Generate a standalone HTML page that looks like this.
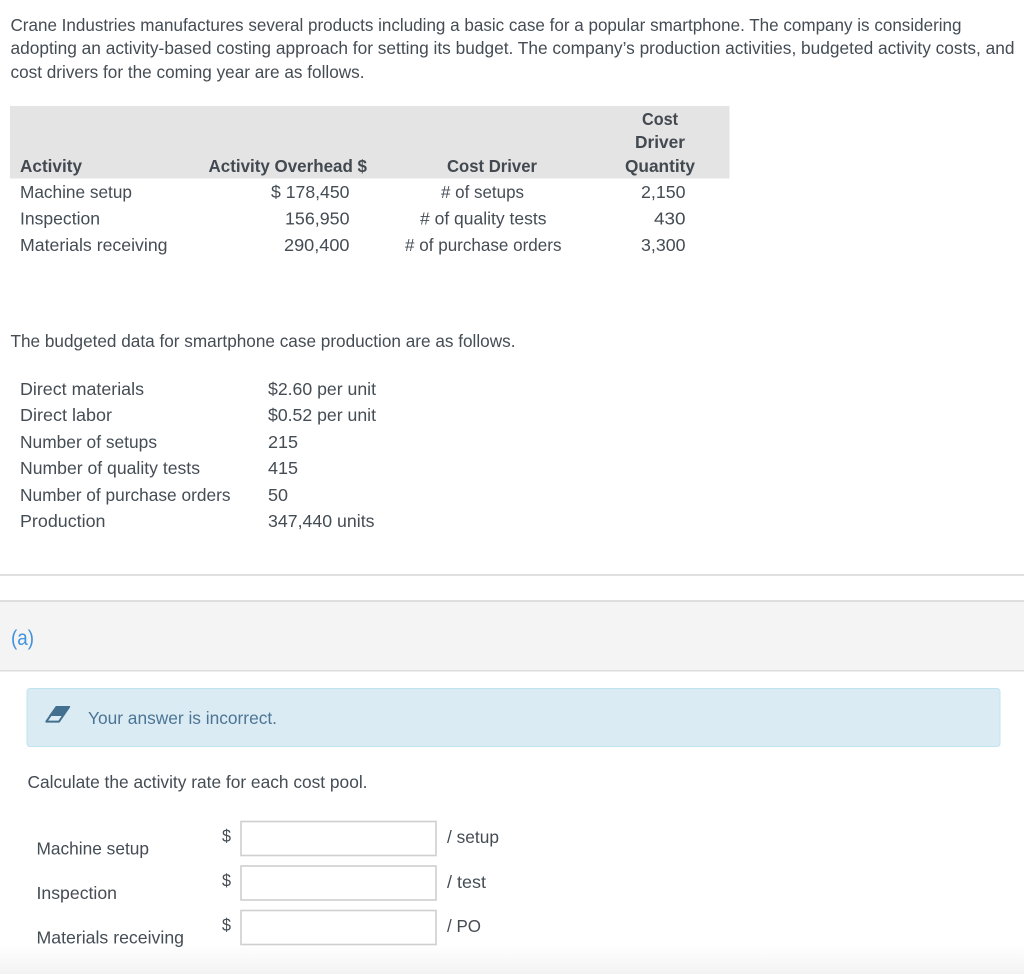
<!DOCTYPE html>
<html lang="en">
<head>
<meta charset="utf-8">
<title>Crane Industries</title>
<style>
html,body{margin:0;padding:0;background:#fff;width:1024px;height:974px;overflow:hidden}
svg{display:block}
text{font-family:"Liberation Sans",sans-serif;font-size:17.5px;fill:#444c54}
.b{font-weight:bold;fill:#424950}
</style>
</head>
<body>
<svg width="1024" height="974" viewBox="0 0 1024 974" xmlns="http://www.w3.org/2000/svg">
<defs><linearGradient id="g" x1="0" y1="0" x2="0" y2="1"><stop offset="0" stop-color="#ffffff"/><stop offset="1" stop-color="#f3f3f3"/></linearGradient></defs>
<rect x="0" y="944" width="1024" height="30" fill="url(#g)"/>

<text x="10.5" y="31" textLength="951" lengthAdjust="spacingAndGlyphs">Crane Industries manufactures several products including a basic case for a popular smartphone. The company is considering</text>
<text x="10.5" y="54" textLength="1004" lengthAdjust="spacingAndGlyphs">adopting an activity-based costing approach for setting its budget. The company’s production activities, budgeted activity costs, and</text>
<text x="10.5" y="78" textLength="354" lengthAdjust="spacingAndGlyphs">cost drivers for the coming year are as follows.</text>

<rect x="10" y="106" width="719.5" height="72.5" fill="#e4e4e4"/>
<text class="b" x="642" y="125" textLength="36" lengthAdjust="spacingAndGlyphs">Cost</text>
<text class="b" x="635" y="148" textLength="50" lengthAdjust="spacingAndGlyphs">Driver</text>
<text class="b" x="20" y="172" textLength="62" lengthAdjust="spacingAndGlyphs">Activity</text>
<text class="b" x="208.5" y="172" textLength="158.5" lengthAdjust="spacingAndGlyphs">Activity Overhead $</text>
<text class="b" x="447" y="172" textLength="90" lengthAdjust="spacingAndGlyphs">Cost Driver</text>
<text class="b" x="625" y="172" textLength="70" lengthAdjust="spacingAndGlyphs">Quantity</text>

<text x="20" y="198" textLength="112" lengthAdjust="spacingAndGlyphs">Machine setup</text>
<text x="271" y="198" textLength="78.5" lengthAdjust="spacingAndGlyphs">$ 178,450</text>
<text x="441" y="198" textLength="83" lengthAdjust="spacingAndGlyphs"># of setups</text>
<text x="641" y="198" textLength="44.5" lengthAdjust="spacingAndGlyphs">2,150</text>
<text x="20" y="224.5" textLength="80" lengthAdjust="spacingAndGlyphs">Inspection</text>
<text x="285" y="224.5" textLength="64.5" lengthAdjust="spacingAndGlyphs">156,950</text>
<text x="420" y="224.5" textLength="126.5" lengthAdjust="spacingAndGlyphs"># of quality tests</text>
<text x="654" y="224.5" textLength="31.5" lengthAdjust="spacingAndGlyphs">430</text>
<text x="20" y="251" textLength="147.5" lengthAdjust="spacingAndGlyphs">Materials receiving</text>
<text x="284" y="251" textLength="65.5" lengthAdjust="spacingAndGlyphs">290,400</text>
<text x="405" y="251" textLength="156.5" lengthAdjust="spacingAndGlyphs"># of purchase orders</text>
<text x="641" y="251" textLength="44.5" lengthAdjust="spacingAndGlyphs">3,300</text>

<text x="10.5" y="347" textLength="505" lengthAdjust="spacingAndGlyphs">The budgeted data for smartphone case production are as follows.</text>

<text x="20" y="395" textLength="124" lengthAdjust="spacingAndGlyphs">Direct materials</text>
<text x="268" y="395" textLength="108" lengthAdjust="spacingAndGlyphs">$2.60 per unit</text>
<text x="20" y="421" textLength="92" lengthAdjust="spacingAndGlyphs">Direct labor</text>
<text x="268" y="421" textLength="108" lengthAdjust="spacingAndGlyphs">$0.52 per unit</text>
<text x="20" y="448" textLength="137" lengthAdjust="spacingAndGlyphs">Number of setups</text>
<text x="268" y="448" textLength="30" lengthAdjust="spacingAndGlyphs">215</text>
<text x="20" y="474" textLength="180" lengthAdjust="spacingAndGlyphs">Number of quality tests</text>
<text x="268" y="474" textLength="30" lengthAdjust="spacingAndGlyphs">415</text>
<text x="20" y="501" textLength="210.5" lengthAdjust="spacingAndGlyphs">Number of purchase orders</text>
<text x="268" y="501" textLength="20" lengthAdjust="spacingAndGlyphs">50</text>
<text x="20" y="527" textLength="85.5" lengthAdjust="spacingAndGlyphs">Production</text>
<text x="268" y="527" textLength="106.5" lengthAdjust="spacingAndGlyphs">347,440 units</text>

<rect x="0" y="574" width="1024" height="2" fill="#e0e0e0"/>
<rect x="0" y="600" width="1024" height="71" fill="#f4f4f4"/>
<rect x="0" y="600" width="1024" height="2" fill="#dedede"/>
<rect x="0" y="670" width="1024" height="1.5" fill="#dedede"/>
<text x="11" y="645" textLength="23" lengthAdjust="spacingAndGlyphs" style="font-size:21px;fill:#4291dc">(a)</text>

<rect x="27" y="688.5" width="973" height="58" rx="3" fill="#daebf3" stroke="#bfe4ef" stroke-width="1"/>
<path d="M56.5 707H69L59 721.6H46.3Z" fill="#dfeef5" stroke="#43708f" stroke-width="2" stroke-linejoin="round"/>
<path d="M56 706H69.5Q70.6 706 70 707L63.8 716H48.8Z" fill="#43708f"/>
<text x="88" y="724" textLength="189" lengthAdjust="spacingAndGlyphs" style="fill:#4c7595">Your answer is incorrect.</text>

<text x="27.5" y="788" textLength="340" lengthAdjust="spacingAndGlyphs">Calculate the activity rate for each cost pool.</text>

<text x="36.5" y="854.5" textLength="112.5" lengthAdjust="spacingAndGlyphs">Machine setup</text>
<text x="36.5" y="899" textLength="80.5" lengthAdjust="spacingAndGlyphs">Inspection</text>
<text x="36.5" y="943.5" textLength="147.5" lengthAdjust="spacingAndGlyphs">Materials receiving</text>

<text x="222" y="842" textLength="9" lengthAdjust="spacingAndGlyphs">$</text>
<text x="222" y="886.5" textLength="9" lengthAdjust="spacingAndGlyphs">$</text>
<text x="222" y="931" textLength="9" lengthAdjust="spacingAndGlyphs">$</text>

<rect x="241" y="821.5" width="195" height="34" fill="#fff" stroke="#cfcfcf" stroke-width="1.6"/>
<rect x="241" y="866" width="195" height="34" fill="#fff" stroke="#cfcfcf" stroke-width="1.6"/>
<rect x="241" y="910.5" width="195" height="34" fill="#fff" stroke="#cfcfcf" stroke-width="1.6"/>

<text x="447" y="843" textLength="52" lengthAdjust="spacingAndGlyphs">/ setup</text>
<text x="447" y="888" textLength="39" lengthAdjust="spacingAndGlyphs">/ test</text>
<text x="447" y="932" textLength="34" lengthAdjust="spacingAndGlyphs">/ PO</text>
</svg>
</body>
</html>
